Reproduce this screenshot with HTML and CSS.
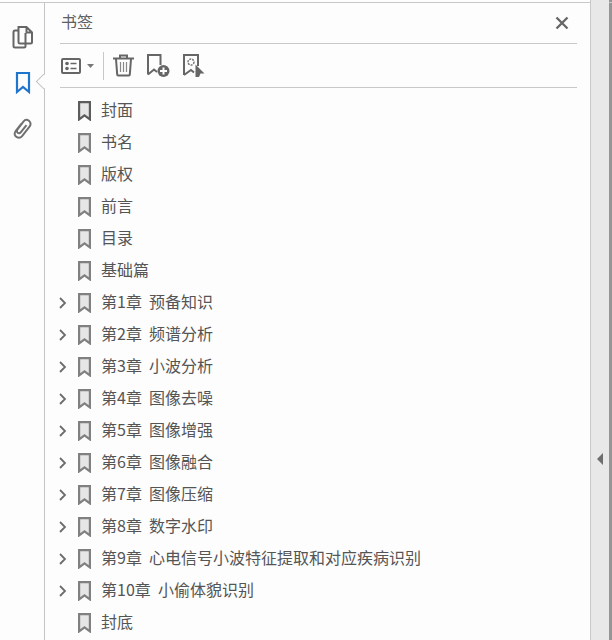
FILE: index.html
```html
<!DOCTYPE html>
<html lang="zh">
<head>
<meta charset="utf-8">
<title>书签</title>
<link rel="stylesheet" href="styles.css">
</head>
<body>
<svg class="defs" width="0" height="0" aria-hidden="true">
  <symbol id="bm" viewBox="0 0 14 20">
    <path d="M1.100 1.100h10.800v17.300l-5.400-4-5.400 4z" fill="#e6e6e6" stroke="currentColor" stroke-width="2.200"/>
  </symbol>
  <symbol id="chev" viewBox="0 0 10 14">
    <path d="M2 2l5 5-5 5" fill="none" stroke="#6c6c6c" stroke-width="1.800"/>
  </symbol>
</svg>
<div class="app">
  <nav class="rail">
    <svg class="rail-icon" width="22" height="24" viewBox="0 0 22 24"><path d="M6.500 5V2h8l5.500 5.500V17a1.500 1.500 0 0 1-1.500 1.500H14M14.500 2v5.500H20M6.500 5.500H3A1.500 1.500 0 0 0 1.500 7v14A1.500 1.500 0 0 0 3 22.500h9a1.500 1.500 0 0 0 1.500-1.500V8M6.500 5v12a1.500 1.500 0 0 0 1.500 1.500h5.500" fill="none" stroke="#666" stroke-width="2"/></svg>
    <svg class="rail-icon" width="16" height="24" viewBox="0 0 16 24"><path d="M2 2h12v19l-6-5-6 5z" fill="none" stroke="#1f74cc" stroke-width="2.200"/></svg>
    <svg class="rail-icon" width="22" height="24" viewBox="0 0 22 24"><path d="M9.500 7.500 4 14.500c-2.500 3.200-1 5.700.8 6.700 2 1.100 4 .5 5.500-1.300l7.200-9.200c1.800-2.300 1-4.800-.6-6-1.800-1.300-4-1-5.500.9L5.500 13.500c-1 1.400-.6 2.700.3 3.300 1 .7 2.200.4 3.100-.7l5.600-7" fill="none" stroke="#707070" stroke-width="2"/></svg>
  </nav>
  <span class="rail-notch"></span>
  <main class="panel">
    <header class="head">
      <h1 class="title">书签</h1>
      <svg width="14" height="14" viewBox="0 0 14 14"><path d="M1.500 1.500l11 11M12.500 1.500l-11 11" stroke="#666" stroke-width="2.300"/></svg>
    </header>
    <div class="tools">
      <svg class="t-list" width="20" height="16" viewBox="0 0 20 16"><rect x="1" y="1" width="18" height="14" rx="1" fill="none" stroke="#666" stroke-width="2"/><circle cx="6" cy="5.500" r="1.800" fill="#666"/><circle cx="6" cy="10.500" r="1.800" fill="#666"/><path d="M9.500 5.500h6M9.500 10.500h6" stroke="#666" stroke-width="1.600"/></svg>
      <svg class="t-caret" width="7" height="4" viewBox="0 0 7 4"><path d="M0 0h7L3.500 4z" fill="#777"/></svg>
      <span class="t-sep"></span>
      <svg class="t-trash" width="21" height="23" viewBox="0 0 21 23"><path d="M0 4.500h21" stroke="#666" stroke-width="2"/><path d="M7 4V1.500h7V4M3 5l1.200 15.500a1 1 0 0 0 1 1h10.600a1 1 0 0 0 1-1L18 5" fill="none" stroke="#666" stroke-width="2"/><path d="M7.500 8v10M10.500 8v10M13.500 8v10" stroke="#888" stroke-width="1.200"/></svg>
      <svg class="t-add" width="23" height="23" viewBox="0 0 23 23"><path d="M1 20.500V1h12.500v10M1 20.500l6-5 3 2.500" fill="none" stroke="#666" stroke-width="2"/><circle cx="16.500" cy="17" r="6" fill="#666"/><path d="M13 17h7M16.500 13.500v7" stroke="#fff" stroke-width="2"/></svg>
      <svg class="t-cur" width="22" height="23" viewBox="0 0 22 23"><path d="M1 21V1h14v11M1 21l7-5 3 2.500" fill="none" stroke="#666" stroke-width="2"/><circle cx="8" cy="8" r="3" fill="none" stroke="#777" stroke-width="1.500" stroke-dasharray="2 1"/><path d="M12.500 10.500l9 9h-4l-1.500 3.500h-3.500z" fill="#666"/></svg>
    </div>
    <ul class="tree">
      <li class="row"><span class="arrow"></span><svg class="bm bm-dark" width="14" height="20"><use href="#bm"/></svg><span class="label">封面</span></li>
      <li class="row"><span class="arrow"></span><svg class="bm" width="14" height="20"><use href="#bm"/></svg><span class="label">书名</span></li>
      <li class="row"><span class="arrow"></span><svg class="bm" width="14" height="20"><use href="#bm"/></svg><span class="label">版权</span></li>
      <li class="row"><span class="arrow"></span><svg class="bm" width="14" height="20"><use href="#bm"/></svg><span class="label">前言</span></li>
      <li class="row"><span class="arrow"></span><svg class="bm" width="14" height="20"><use href="#bm"/></svg><span class="label">目录</span></li>
      <li class="row"><span class="arrow"></span><svg class="bm" width="14" height="20"><use href="#bm"/></svg><span class="label">基础篇</span></li>
      <li class="row"><svg class="arrow" width="10" height="14"><use href="#chev"/></svg><svg class="bm" width="14" height="20"><use href="#bm"/></svg><span class="label">第1章&nbsp;&nbsp;预备知识</span></li>
      <li class="row"><svg class="arrow" width="10" height="14"><use href="#chev"/></svg><svg class="bm" width="14" height="20"><use href="#bm"/></svg><span class="label">第2章&nbsp;&nbsp;频谱分析</span></li>
      <li class="row"><svg class="arrow" width="10" height="14"><use href="#chev"/></svg><svg class="bm" width="14" height="20"><use href="#bm"/></svg><span class="label">第3章&nbsp;&nbsp;小波分析</span></li>
      <li class="row"><svg class="arrow" width="10" height="14"><use href="#chev"/></svg><svg class="bm" width="14" height="20"><use href="#bm"/></svg><span class="label">第4章&nbsp;&nbsp;图像去噪</span></li>
      <li class="row"><svg class="arrow" width="10" height="14"><use href="#chev"/></svg><svg class="bm" width="14" height="20"><use href="#bm"/></svg><span class="label">第5章&nbsp;&nbsp;图像增强</span></li>
      <li class="row"><svg class="arrow" width="10" height="14"><use href="#chev"/></svg><svg class="bm" width="14" height="20"><use href="#bm"/></svg><span class="label">第6章&nbsp;&nbsp;图像融合</span></li>
      <li class="row"><svg class="arrow" width="10" height="14"><use href="#chev"/></svg><svg class="bm" width="14" height="20"><use href="#bm"/></svg><span class="label">第7章&nbsp;&nbsp;图像压缩</span></li>
      <li class="row"><svg class="arrow" width="10" height="14"><use href="#chev"/></svg><svg class="bm" width="14" height="20"><use href="#bm"/></svg><span class="label">第8章&nbsp;&nbsp;数字水印</span></li>
      <li class="row"><svg class="arrow" width="10" height="14"><use href="#chev"/></svg><svg class="bm" width="14" height="20"><use href="#bm"/></svg><span class="label">第9章&nbsp;&nbsp;心电信号小波特征提取和对应疾病识别</span></li>
      <li class="row"><svg class="arrow" width="10" height="14"><use href="#chev"/></svg><svg class="bm" width="14" height="20"><use href="#bm"/></svg><span class="label">第10章&nbsp;&nbsp;小偷体貌识别</span></li>
      <li class="row"><span class="arrow"></span><svg class="bm" width="14" height="20"><use href="#bm"/></svg><span class="label">封底</span></li>
    </ul>
  </main>
  <aside class="strip">
    <span class="strip-arrow"></span>
  </aside>
  <span class="edge"></span>
</div>
</body>
</html>
```
FILE: styles.css
```css
* { box-sizing: border-box; }
html, body { margin: 0; height: 100%; }
body {
  background: #fdfdfd;
  font-family: "Noto Sans CJK SC", "Liberation Sans", sans-serif;
  color: #555;
  overflow: hidden;
}
.defs { position: absolute; }
.app {
  position: relative;
  display: flex;
  height: 640px;
  padding-top: 3px;
}
.app::before {
  content: "";
  position: absolute;
  left: 0; right: 0; top: 2px;
  height: 1px;
  background: #c8c8c8;
}
.rail {
  width: 45px;
  flex: none;
  border-right: 1px solid #c4c4c4;
  display: flex;
  flex-direction: column;
  align-items: center;
  gap: 22px;
  padding-top: 22px;
  padding-left: 2px;
}
.rail-icon { display: block; }
.rail-icon + .rail-icon + .rail-icon { margin-top: -1px; }
.rail-notch {
  position: absolute;
  left: 38px;
  top: 76px;
  width: 11px;
  height: 11px;
  background: #fdfdfd;
  border-left: 1px solid #c4c4c4;
  border-bottom: 1px solid #c4c4c4;
  transform: rotate(45deg);
}
.panel {
  width: 545px;
  flex: none;
  padding: 0 13px 0 15px;
}
.head {
  height: 41px;
  display: flex;
  align-items: center;
  justify-content: space-between;
  padding-right: 8px;
  border-bottom: 1px solid #c8c8c8;
}
.title {
  margin: 0 0 5px;
  padding-left: 1px;
  font-size: 16px;
  line-height: 24px;
  font-weight: 400;
  color: #606060;
}
.tools {
  height: 44px;
  display: flex;
  align-items: center;
  border-bottom: 1px solid #c8c8c8;
  padding-left: 1px;
}
.t-caret { margin-left: 6px; }
.t-sep { width: 1px; height: 28px; background: #c8c8c8; margin: 0 9px; }
.t-trash { margin-right: 13px; }
.t-add { margin-right: 13px; }
.tree {
  list-style: none;
  margin: 7px 0 0 -15px;
  padding: 0;
}
.row {
  height: 32px;
  display: flex;
  align-items: center;
  font-size: 16px;
  line-height: 28px;
  white-space: nowrap;
}
.label { margin-bottom: 4px; }
.arrow {
  display: block;
  width: 10px;
  margin-left: 13px;
  margin-right: 10px;
  flex: none;
}
.bm { flex: none; margin-right: 9px; color: #808080; }
.bm-dark { color: #5c5c5c; }
.strip {
  width: 19px;
  flex: none;
  margin-top: -3px;
  height: 640px;
  background: #e8e8e8;
  border-left: 1px solid #c8c8c8;
  position: relative;
}
.strip-arrow {
  position: absolute;
  left: 6px;
  top: 453px;
  border-style: solid;
  border-width: 6px 6px 6px 0;
  border-color: transparent #6e6e6e transparent transparent;
}
.edge {
  flex: 1;
  margin-top: -3px;
  height: 640px;
  background: #959595;
}
```
